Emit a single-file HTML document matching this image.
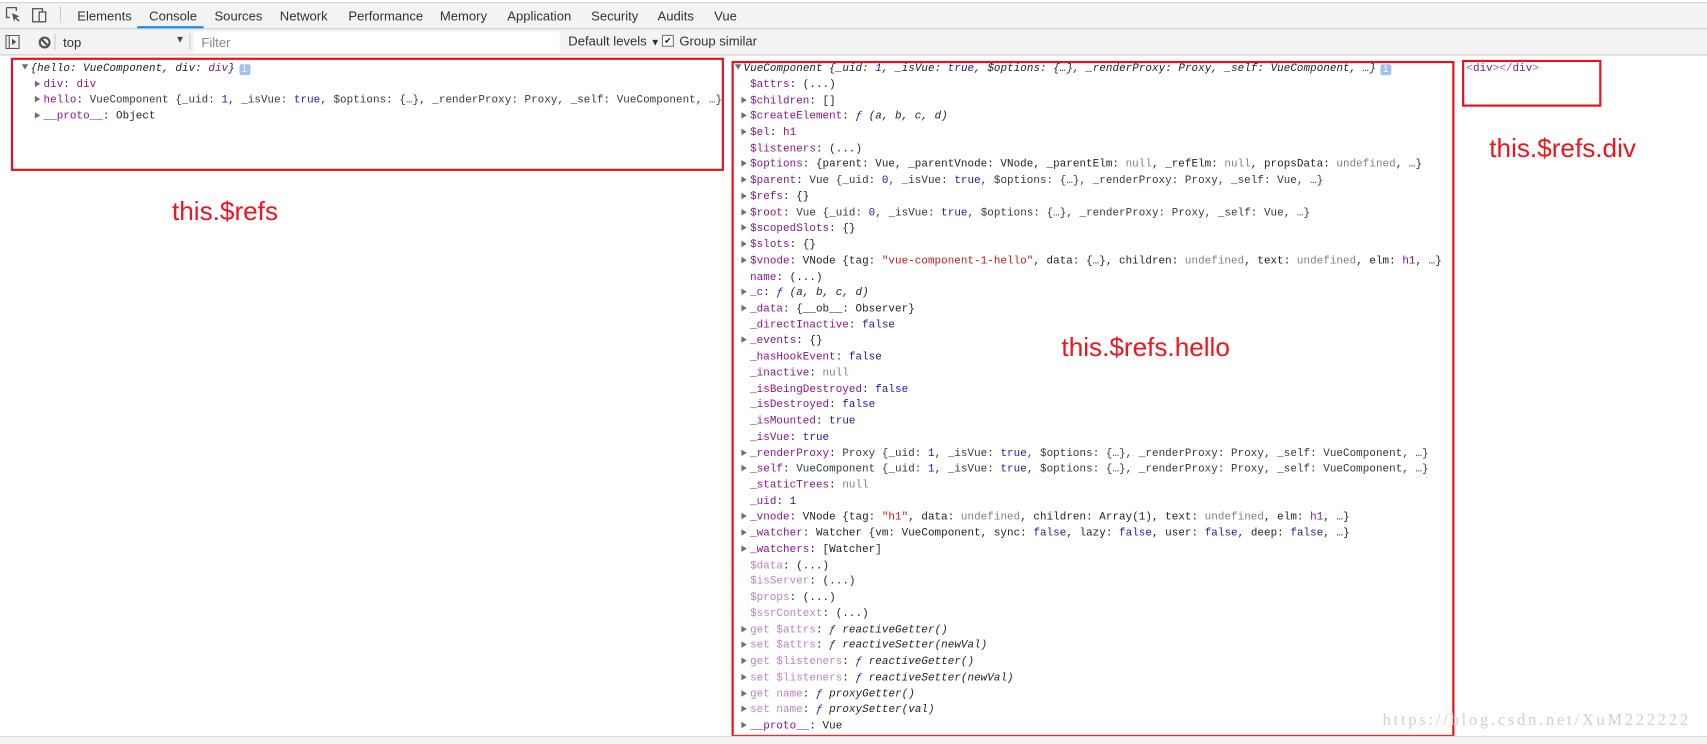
<!DOCTYPE html>
<html><head><meta charset="utf-8"><style>
body{margin:0;width:1707px;height:742px;position:relative;overflow:hidden;background:#fff;font-family:"Liberation Sans",sans-serif}
#w{position:absolute;left:0;top:0;width:1568px;height:682px;transform:scale(1.08865);transform-origin:0 0}
.tb{position:absolute;left:0;width:1568px;background:#f3f3f3;border-bottom:1px solid #ccc}
.tab{position:absolute;top:8px;font-size:12px;color:#333}
.l{position:absolute;font-family:"Liberation Mono",monospace;font-size:10px;line-height:14px;white-space:pre;color:#222;letter-spacing:0.05px}
.k{color:#881391}.d{color:#c080c4}.b{color:#1a1aa6}.s{color:#c41a16}.n{color:#808080}.g{color:#303942}
.i{font-style:italic}.f{color:#0d22aa;font-style:italic}
.t{display:inline-block;width:0;height:0;border-left:5px solid #6e6e6e;border-top:3px solid transparent;border-bottom:3px solid transparent;margin-right:3px;vertical-align:0}
.td{display:inline-block;width:0;height:0;border-top:5px solid #6e6e6e;border-left:3px solid transparent;border-right:3px solid transparent;margin-right:2px;vertical-align:1px}
.sp{display:inline-block;width:8px}
.box{position:absolute;border:2px solid #e8101e;box-sizing:border-box}
.lab{position:absolute;color:#f0141e;font-size:24px;font-family:"Liberation Sans",sans-serif}
.info{display:inline-block;width:10px;height:10px;background:#9fc1f0;border-radius:2px;color:#fff;font-size:9px;line-height:10px;text-align:center;vertical-align:-1px;margin-left:4px;font-style:normal}
</style></head><body><div id="w">
<div style="position:absolute;left:0;top:0;width:1568px;height:2px;background:#fff;border-bottom:1px solid #ccc"></div>
<div class="tb" style="top:3px;height:23px"></div>
<div class="tb" style="top:27px;height:23px"></div>
<svg style="position:absolute;left:5px;top:6px" width="40" height="16"><path d="M1 1h9v3M1 1v9h3" fill="none" stroke="#555" stroke-width="1.2"/><path d="M6 6l7 3-3 1 3 3-1 1-3-3-1 3z" fill="#555"/><rect x="25" y="2" width="9" height="12" fill="none" stroke="#555" stroke-width="1.2"/><rect x="31" y="5" width="6" height="9" fill="#f3f3f3" stroke="#555" stroke-width="1.2"/></svg>
<div style="position:absolute;left:55px;top:6px;width:1px;height:15px;background:#ccc"></div>
<div class="tab" style="left:71px">Elements</div>
<div class="tab" style="left:137px">Console</div>
<div style="position:absolute;left:126px;top:24px;width:61px;height:2px;background:#1a8ded"></div>
<div class="tab" style="left:197px">Sources</div>
<div class="tab" style="left:257px">Network</div>
<div class="tab" style="left:320px">Performance</div>
<div class="tab" style="left:404px">Memory</div>
<div class="tab" style="left:466px">Application</div>
<div class="tab" style="left:543px">Security</div>
<div class="tab" style="left:604px">Audits</div>
<div class="tab" style="left:656px">Vue</div>
<svg style="position:absolute;left:5px;top:32px" width="44" height="16"><rect x="0.5" y="0.5" width="12" height="12" fill="none" stroke="#555"/><line x1="3.5" y1="1" x2="3.5" y2="12" stroke="#555"/><path d="M6 3.5l4 3-4 3z" fill="#555"/><circle cx="36" cy="7" r="4.5" fill="none" stroke="#555" stroke-width="2"/><line x1="33" y1="4" x2="39" y2="10" stroke="#555" stroke-width="2"/></svg>
<div style="position:absolute;left:50px;top:31px;width:1px;height:15px;background:#ccc"></div>
<div class="tab" style="left:58px;top:32px">top</div>
<div class="tab" style="left:161px;top:31px;font-size:9px;color:#444">▼</div>
<div style="position:absolute;left:174px;top:31px;width:1px;height:15px;background:#ccc"></div>
<div style="position:absolute;left:178px;top:29px;width:336px;height:20px;background:#fff"></div>
<div class="tab" style="left:185px;top:32px;color:#888">Filter</div>
<div class="tab" style="left:522px;top:31px">Default levels <span style="font-size:9px">▼</span></div>
<div style="position:absolute;left:608px;top:32px;width:9px;height:9px;border:1px solid #777;background:#fff;font-size:8px;line-height:9px;text-align:center">✔</div>
<div class="tab" style="left:624px;top:31px">Group similar</div>

<div class="box" style="left:10px;top:53px;width:655px;height:104px"></div>
<div class="box" style="left:672px;top:56px;width:664px;height:621px"></div>
<div class="box" style="left:1343px;top:55px;width:128px;height:43px"></div>
<div class="lab" style="left:158px;top:181px">this.$refs</div>
<div class="lab" style="left:975px;top:306px">this.$refs.hello</div>
<div class="lab" style="left:1368px;top:123px">this.$refs.div</div>
<div class="l" style="left:1347px;top:57px;color:#a5a">&lt;<span class="k">div</span>&gt;&lt;/<span class="k">div</span>&gt;</div>

<div class="l" style="left:20px;top:57px"><span class="td"></span><span class="i">{hello: VueComponent, div: <span class="k">div</span>}</span><span class="info">i</span></div>
<div class="l" style="left:32px;top:72px"><span class="t"></span><span class="k">div</span>: <span class="k">div</span></div>
<div class="l" style="left:32px;top:86px"><span class="t"></span><span class="k">hello</span>: <span class="g">VueComponent {_uid: <span class="b">1</span>, _isVue: <span class="b">true</span>, $options: {…}, _renderProxy: Proxy, _self: VueComponent, …}</span></div>
<div class="l" style="left:32px;top:101px"><span class="t"></span><span class="k">__proto__</span>: Object</div>

<div style="position:absolute;left:675px;top:57px">
<div class="l" style="left:0;top:0"><span class="td"></span><span class="i">VueComponent {_uid: <span class="b">1</span>, _isVue: <span class="b">true</span>, $options: {…}, _renderProxy: Proxy, _self: VueComponent, …}</span><span class="info">i</span></div>
<div class="l" style="left:6px;top:14.7px"><span class="sp"></span><span class="k">$attrs</span>: (...)</div>
<div class="l" style="left:6px;top:29.5px"><span class="t"></span><span class="k">$children</span>: []</div>
<div class="l" style="left:6px;top:44.2px"><span class="t"></span><span class="k">$createElement</span>: <span class="f">ƒ</span> <span class="i">(a, b, c, d)</span></div>
<div class="l" style="left:6px;top:58.9px"><span class="t"></span><span class="k">$el</span>: <span class="k">h1</span></div>
<div class="l" style="left:6px;top:73.7px"><span class="sp"></span><span class="k">$listeners</span>: (...)</div>
<div class="l" style="left:6px;top:88.4px"><span class="t"></span><span class="k">$options</span>: {parent: Vue, _parentVnode: VNode, _parentElm: <span class="n">null</span>, _refElm: <span class="n">null</span>, propsData: <span class="n">undefined</span>, …}</div>
<div class="l" style="left:6px;top:103.1px"><span class="t"></span><span class="k">$parent</span>: <span class="g">Vue {_uid: <span class="b">0</span>, _isVue: <span class="b">true</span>, $options: {…}, _renderProxy: Proxy, _self: Vue, …}</span></div>
<div class="l" style="left:6px;top:117.8px"><span class="t"></span><span class="k">$refs</span>: {}</div>
<div class="l" style="left:6px;top:132.6px"><span class="t"></span><span class="k">$root</span>: <span class="g">Vue {_uid: <span class="b">0</span>, _isVue: <span class="b">true</span>, $options: {…}, _renderProxy: Proxy, _self: Vue, …}</span></div>
<div class="l" style="left:6px;top:147.3px"><span class="t"></span><span class="k">$scopedSlots</span>: {}</div>
<div class="l" style="left:6px;top:162px"><span class="t"></span><span class="k">$slots</span>: {}</div>
<div class="l" style="left:6px;top:176.8px"><span class="t"></span><span class="k">$vnode</span>: VNode {tag: <span class="s">"vue-component-1-hello"</span>, data: {…}, children: <span class="n">undefined</span>, text: <span class="n">undefined</span>, elm: <span class="k">h1</span>, …}</div>
<div class="l" style="left:6px;top:191.5px"><span class="sp"></span><span class="k">name</span>: (...)</div>
<div class="l" style="left:6px;top:206.2px"><span class="t"></span><span class="k">_c</span>: <span class="f">ƒ</span> <span class="i">(a, b, c, d)</span></div>
<div class="l" style="left:6px;top:221px"><span class="t"></span><span class="k">_data</span>: {__ob__: Observer}</div>
<div class="l" style="left:6px;top:235.7px"><span class="sp"></span><span class="k">_directInactive</span>: <span class="b">false</span></div>
<div class="l" style="left:6px;top:250.4px"><span class="t"></span><span class="k">_events</span>: {}</div>
<div class="l" style="left:6px;top:265.1px"><span class="sp"></span><span class="k">_hasHookEvent</span>: <span class="b">false</span></div>
<div class="l" style="left:6px;top:279.9px"><span class="sp"></span><span class="k">_inactive</span>: <span class="n">null</span></div>
<div class="l" style="left:6px;top:294.6px"><span class="sp"></span><span class="k">_isBeingDestroyed</span>: <span class="b">false</span></div>
<div class="l" style="left:6px;top:309.3px"><span class="sp"></span><span class="k">_isDestroyed</span>: <span class="b">false</span></div>
<div class="l" style="left:6px;top:324.1px"><span class="sp"></span><span class="k">_isMounted</span>: <span class="b">true</span></div>
<div class="l" style="left:6px;top:338.8px"><span class="sp"></span><span class="k">_isVue</span>: <span class="b">true</span></div>
<div class="l" style="left:6px;top:353.5px"><span class="t"></span><span class="k">_renderProxy</span>: <span class="g">Proxy {_uid: <span class="b">1</span>, _isVue: <span class="b">true</span>, $options: {…}, _renderProxy: Proxy, _self: VueComponent, …}</span></div>
<div class="l" style="left:6px;top:368.3px"><span class="t"></span><span class="k">_self</span>: <span class="g">VueComponent {_uid: <span class="b">1</span>, _isVue: <span class="b">true</span>, $options: {…}, _renderProxy: Proxy, _self: VueComponent, …}</span></div>
<div class="l" style="left:6px;top:383px"><span class="sp"></span><span class="k">_staticTrees</span>: <span class="n">null</span></div>
<div class="l" style="left:6px;top:397.7px"><span class="sp"></span><span class="k">_uid</span>: <span class="b">1</span></div>
<div class="l" style="left:6px;top:412.4px"><span class="t"></span><span class="k">_vnode</span>: VNode {tag: <span class="s">"h1"</span>, data: <span class="n">undefined</span>, children: Array(1), text: <span class="n">undefined</span>, elm: <span class="k">h1</span>, …}</div>
<div class="l" style="left:6px;top:427.2px"><span class="t"></span><span class="k">_watcher</span>: Watcher {vm: VueComponent, sync: <span class="b">false</span>, lazy: <span class="b">false</span>, user: <span class="b">false</span>, deep: <span class="b">false</span>, …}</div>
<div class="l" style="left:6px;top:441.9px"><span class="t"></span><span class="k">_watchers</span>: [Watcher]</div>
<div class="l" style="left:6px;top:456.6px"><span class="sp"></span><span class="d">$data</span>: (...)</div>
<div class="l" style="left:6px;top:471.4px"><span class="sp"></span><span class="d">$isServer</span>: (...)</div>
<div class="l" style="left:6px;top:486.1px"><span class="sp"></span><span class="d">$props</span>: (...)</div>
<div class="l" style="left:6px;top:500.8px"><span class="sp"></span><span class="d">$ssrContext</span>: (...)</div>
<div class="l" style="left:6px;top:515.6px"><span class="t"></span><span class="d">get $attrs</span>: <span class="f">ƒ</span> <span class="i">reactiveGetter()</span></div>
<div class="l" style="left:6px;top:530.3px"><span class="t"></span><span class="d">set $attrs</span>: <span class="f">ƒ</span> <span class="i">reactiveSetter(newVal)</span></div>
<div class="l" style="left:6px;top:545px"><span class="t"></span><span class="d">get $listeners</span>: <span class="f">ƒ</span> <span class="i">reactiveGetter()</span></div>
<div class="l" style="left:6px;top:559.7px"><span class="t"></span><span class="d">set $listeners</span>: <span class="f">ƒ</span> <span class="i">reactiveSetter(newVal)</span></div>
<div class="l" style="left:6px;top:574.5px"><span class="t"></span><span class="d">get name</span>: <span class="f">ƒ</span> <span class="i">proxyGetter()</span></div>
<div class="l" style="left:6px;top:589.2px"><span class="t"></span><span class="d">set name</span>: <span class="f">ƒ</span> <span class="i">proxySetter(val)</span></div>
<div class="l" style="left:6px;top:603.9px"><span class="t"></span><span class="k">__proto__</span>: Vue</div>
</div>
<div style="position:absolute;left:1270px;top:654px;font-family:'Liberation Serif',serif;font-size:15px;letter-spacing:2.6px;color:#cfcfcf">https://blog.csdn.net/XuM222222</div>
<div style="position:absolute;left:0;top:676px;width:1568px;height:6px;background:#f3f3f3;border-top:1px solid #ddd"></div>
</div></body></html>
